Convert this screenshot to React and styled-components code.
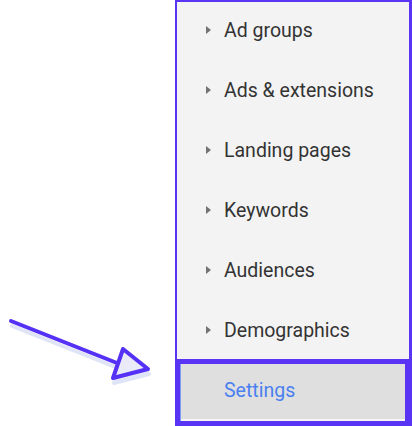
import styled, { createGlobalStyle } from "styled-components";

const GlobalStyle = createGlobalStyle`
  html, body {
    margin: 0;
    padding: 0;
    background: #ffffff;
  }
  body {
    font-family: Roboto, "Liberation Sans", Arial, sans-serif;
  }
`;

const Page = styled.div`
  /* Layout */
  display: flex;
  width: 412px;
  height: 426px;
  overflow: hidden;
`;

const PointerArea = styled.div`
  display: flex;
  flex-direction: column;
  justify-content: flex-end;
  width: 175px;
  padding-bottom: 40px;
  box-sizing: border-box;
`;

const Panel = styled.div`
  display: flex;
  flex-direction: column;
  flex: 1;
`;

const Menu = styled.ul`
  /* Style */
  list-style: none;
  margin: 0;
  padding: 0;
  background-color: #f3f3f3;
  border: solid #5a34f5;
  border-width: 2px 3px 0 2px;
  /* Layout */
  display: flex;
  flex-direction: column;
`;

const MenuItem = styled.li`
  height: 60px;
  box-sizing: border-box;
  display: flex;
  align-items: center;
  padding: 0 0 4px 29px;
  font-size: 19.5px;
  color: #333333;
`;

const Caret = styled.span`
  width: 0;
  height: 0;
  border-top: 4px solid transparent;
  border-bottom: 4px solid transparent;
  border-left: 5px solid #727272;
  margin-right: 13px;
`;

const SettingsItem = styled.div`
  /* Style */
  border: 5px solid #5a34f5;
  border-right-width: 7px;
  background-color: #dfdfdf;
  box-shadow: inset 1px 0 0 #7d9df3, inset 0 -2px 0 #f6f6f6;
  color: #4a80f0;
  font-size: 19.5px;
  /* Size */
  flex: 1;
  margin-top: -3px;
  box-sizing: border-box;
  padding: 0 0 4px 44px;
  /* Layout */
  display: flex;
  align-items: center;
`;

const items = [
  "Ad groups",
  "Ads & extensions",
  "Landing pages",
  "Keywords",
  "Audiences",
  "Demographics",
];

const Pointer = () => (
  <svg width="175" height="80" viewBox="0 0 175 80">
    <g fill="none" stroke="#dfe4f7" strokeWidth="4" strokeLinecap="round" strokeLinejoin="round" transform="translate(1 5)">
      <line x1="11" y1="15" x2="117" y2="57" />
      <polygon points="123,43 148,63 113,72" fill="#e6e9f8" />
    </g>
    <g fill="none" stroke="#5530f5" strokeWidth="4" strokeLinecap="round" strokeLinejoin="round">
      <line x1="11" y1="15" x2="117" y2="57" />
      <polygon points="123,43 148,63 113,72" fill="#e9ebf8" />
    </g>
  </svg>
);

const App = () => {
  return (
    <>
      <GlobalStyle />
      <Page>
        {/* Flecha que señala la opción */}
        <PointerArea>
          <Pointer />
        </PointerArea>
        {/* Menú lateral */}
        <Panel>
          <Menu>
            {items.map((item) => (
              <MenuItem key={item}>
                <Caret />
                {item}
              </MenuItem>
            ))}
          </Menu>
          <SettingsItem>Settings</SettingsItem>
        </Panel>
      </Page>
    </>
  );
};

export default App;
